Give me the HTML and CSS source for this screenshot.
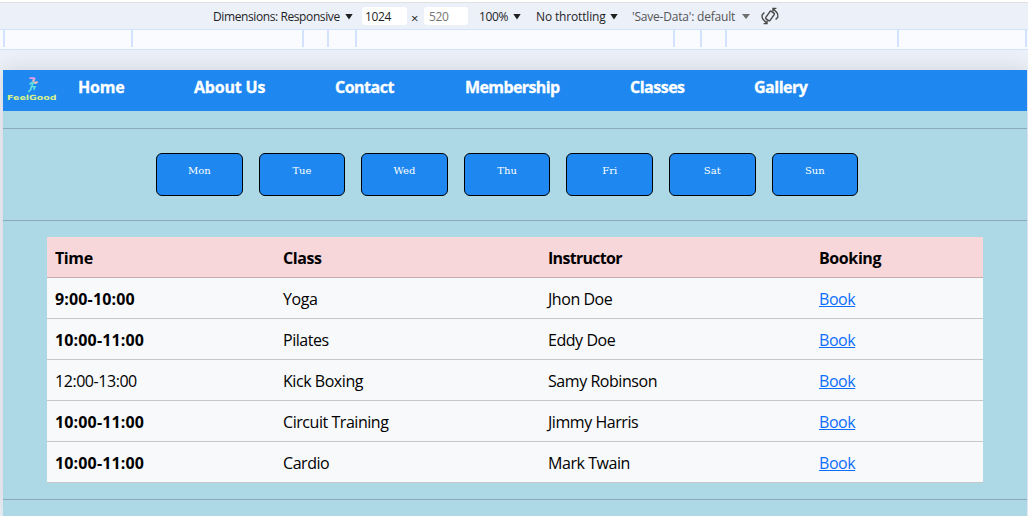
FILE: index.html
```html
<!DOCTYPE html>
<html lang="en">
<head>
<meta charset="utf-8">
<title>FeelGood Classes</title>
<link rel="stylesheet" href="styles.css">
</head>
<body>
<header class="toolbar">
  <span class="item dims">Dimensions: Responsive</span>
  <i class="arrow a1"></i>
  <span class="field f1">1024</span>
  <span class="times">×</span>
  <span class="field f2">520</span>
  <span class="item zoom">100%</span>
  <i class="arrow a2"></i>
  <span class="item throttle">No throttling</span>
  <i class="arrow a3"></i>
  <span class="item save">'Save-Data': default</span>
  <i class="arrow a4"></i>
  <svg class="rotate" width="20" height="20" viewBox="0 0 20 20" fill="none" stroke="#474747" stroke-width="1.4">
    <rect x="7.4" y="5.4" width="5.2" height="9.2" rx="1" transform="rotate(35 10 10)"/>
    <path d="M4.4 6.6L2.2 8.8Q1.6 11.6 3.2 13.6L6.8 17.2M3.6 17.6H7V14.4"/>
    <path d="M15.6 13.4L17.8 11.2Q18.4 8.4 16.8 6.4L13.2 2.8M16.4 2.4H13V5.6"/>
  </svg>
</header>
<div class="ruler">
  <i class="s1"></i><i class="s2"></i><i class="s3"></i><i class="s4"></i><i class="s5"></i><i class="s6"></i><i class="s7"></i><i class="s8"></i><i class="s9"></i><i class="s10"></i>
</div>
<main class="page">
  <nav class="nav">
    <svg class="logo" width="75" height="41" viewBox="0 0 75 41">
      <g fill="none" stroke-linecap="round">
        <path d="M27 8.2h4.5M31.5 8v1.6" stroke="#e09be6" stroke-width="1.7"/>
        <path d="M30.2 10.3l.4 1.2M32 13l2-.8" stroke="#f2c0b5" stroke-width="2"/>
        <path d="M30.5 12.5l-2 4M29 12.5l-2 1.5M28.5 16.5l3.5 .2-1 2.6M28.5 16.5l-.8 3-2 2" stroke="#62e2df" stroke-width="1.6"/>
      </g>
      <text class="brand" x="4" y="30.3" textLength="49.5" lengthAdjust="spacingAndGlyphs">FeelGood</text>
    </svg>
    <a class="n1">Home</a><a class="n2">About Us</a><a class="n3">Contact</a><a class="n4">Membership</a><a class="n5">Classes</a><a class="n6">Gallery</a>
  </nav>
  <hr class="rule first">
  <section class="days">
    <a class="day">Mon</a><a class="day">Tue</a><a class="day">Wed</a><a class="day">Thu</a><a class="day">Fri</a><a class="day">Sat</a><a class="day">Sun</a>
  </section>
  <hr class="rule">
  <table class="schedule">
    <colgroup><col class="c1"><col class="c2"><col class="c3"><col class="c4"></colgroup>
    <thead><tr><th>Time</th><th>Class</th><th class="instructor">Instructor</th><th>Booking</th></tr></thead>
    <tbody>
      <tr><th>9:00-10:00</th><td>Yoga</td><td>Jhon Doe</td><td><a class="book">Book</a></td></tr>
      <tr><th>10:00-11:00</th><td>Pilates</td><td>Eddy Doe</td><td><a class="book">Book</a></td></tr>
      <tr><td>12:00-13:00</td><td>Kick Boxing</td><td>Samy Robinson</td><td><a class="book">Book</a></td></tr>
      <tr><th>10:00-11:00</th><td>Circuit Training</td><td>Jimmy Harris</td><td><a class="book">Book</a></td></tr>
      <tr><th>10:00-11:00</th><td>Cardio</td><td>Mark Twain</td><td><a class="book">Book</a></td></tr>
    </tbody>
  </table>
  <hr class="rule">
</main>
</body>
</html>
```
FILE: styles.css
```css
* { box-sizing: border-box; }
body {
  margin: 0;
  height: 516px;
  overflow: hidden;
  background: #ecf0f9;
  font-family: "Open Sans", "Noto Sans", sans-serif;
}
.toolbar {
  display: flex;
  align-items: center;
  height: 30px;
  padding: 1px 0 0 213px;
  border-top: 2px solid #fff;
  border-bottom: 1px solid #d3e3fd;
  box-shadow: inset 0 1px #dfe0dc;
  font-size: 12px;
  color: #1f1f1f;
  white-space: nowrap;
}
.toolbar > * { flex: none; }
.item { padding-top: 1px; }
.dims { width: 132px; letter-spacing: -0.4px; }
.arrow {
  width: 8px;
  height: 6px;
  margin-top: 1px;
  background: #1f1f1f;
  clip-path: polygon(0 0, 100% 0, 50% 100%);
}
.field {
  height: 18px;
  padding-left: 3px;
  border-radius: 3px;
  background: #fff;
  line-height: 19px;
  letter-spacing: -0.4px;
}
.f1 { width: 45px; margin-left: 9px; }
.f2 { width: 44px; padding-left: 5px; color: #757575; }
.times { width: 17px; padding: 3px 0 0 4px; font-size: 13px; }
.zoom { width: 45px; padding-left: 11px; letter-spacing: -0.4px; }
.throttle { width: 89px; padding-left: 15px; letter-spacing: -0.15px; }
.save { width: 124px; padding-left: 14px; color: #555; letter-spacing: -0.2px; }
.a4 { height: 5px; background: #6e6e6e; }
.rotate { margin-left: 10px; }
.ruler {
  display: flex;
  height: 20px;
  padding: 0 0 2px 3px;
  border-bottom: 1px solid #d3e3fd;
  background: #f9fbff;
}
.ruler i { flex: none; border-left: 2px solid #d3e3fd; }
.s1 { width: 128px; }
.s2 { width: 171px; }
.s3 { width: 25px; }
.s4 { width: 28px; }
.s5 { width: 318px; }
.s6 { width: 27px; }
.s7 { width: 25px; }
.s8 { width: 172px; }
.s9 { width: 128px; }
.s10 { width: 2px; }
.page {
  width: 1024px;
  height: 446px;
  margin: 20px 0 0 3px;
  background: #add8e6;
  box-shadow: 0 0 20px rgba(0, 0, 0, 0.12);
}
.nav {
  display: flex;
  height: 41px;
  background: #1e88f0;
  color: #fff;
  font-size: 16px;
  font-weight: 700;
  line-height: 34px;
  letter-spacing: -0.5px;
  -webkit-text-stroke: 0.3px #fff;
  white-space: nowrap;
}
.brand {
  fill: #d9f28a;
  font: 700 7px "DejaVu Sans", sans-serif;
  letter-spacing: 0;
  -webkit-text-stroke: 0.3px #d9f28a;
}
.n1 { width: 116px; letter-spacing: -0.2px; }
.n2 { width: 141px; letter-spacing: -0.2px; }
.n3 { width: 130px; }
.n4 { width: 165px; letter-spacing: -0.6px; }
.n5 { width: 124px; }
.rule {
  height: 1px;
  margin: 0;
  border: 0;
  background: #8aaab7;
}
.first { margin-top: 17px; }
.days {
  display: flex;
  gap: 16px;
  height: 91px;
  padding: 24px 168.9px 24px 153px;
}
.day {
  flex: 1;
  border: 1px solid #000;
  border-radius: 6px;
  background: #1e88f0;
  color: #fff;
  font: 10px/34px "DejaVu Serif", serif;
  text-align: center;
}
.schedule {
  width: 936px;
  margin: 16px 0 16px 44px;
  border-collapse: separate;
  border-spacing: 0;
  table-layout: fixed;
  background: #f8f9fa;
  color: #000;
  font-size: 16px;
  line-height: 24px;
  text-align: left;
}
.schedule th, .schedule td {
  height: 41px;
  padding: 9px 8px 7px;
  border-bottom: 1px solid #c6c7c8;
}
.schedule td { letter-spacing: -0.45px; }
.schedule tbody th { letter-spacing: 0.15px; }
.schedule thead th {
  background: #f8d7da;
  border-bottom-color: #c6acae;
  letter-spacing: -0.4px;
}
.schedule thead .instructor { letter-spacing: -0.7px; }
.c1 { width: 228px; }
.c2 { width: 265px; }
.c3 { width: 271px; }
.c4 { width: 172px; }
.book { color: #0d6efd; text-decoration: underline; }
```
